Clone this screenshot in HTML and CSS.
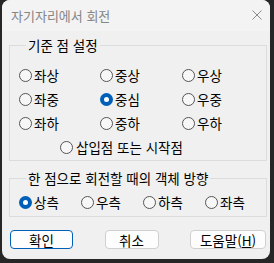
FILE: index.html
```html
<!DOCTYPE html>
<html lang="ko">
<head>
  <meta charset="UTF-8" />
  <title>자기자리에서 회전</title>
  <link rel="stylesheet" href="styles.css">
</head>
<body>

  <div class="window">
    <div class="titlebar">
      <span class="title">자기자리에서 회전</span>
      <svg class="close" width="10" height="10" viewBox="0 0 10 10">
        <path d="M0.5 0.5 L9.5 9.5 M9.5 0.5 L0.5 9.5" stroke="#8a8a8a" stroke-width="1" fill="none"/>
      </svg>
    </div>

    <div class="content">
      <fieldset class="group">
        <legend>기준 점 설정</legend>
        <div class="grid">
          <label class="opt"><span class="radio"></span>좌상</label>
          <label class="opt"><span class="radio"></span>중상</label>
          <label class="opt"><span class="radio"></span>우상</label>
          <label class="opt"><span class="radio"></span>좌중</label>
          <label class="opt"><span class="radio checked"></span>중심</label>
          <label class="opt"><span class="radio"></span>우중</label>
          <label class="opt"><span class="radio"></span>좌하</label>
          <label class="opt"><span class="radio"></span>중하</label>
          <label class="opt"><span class="radio"></span>우하</label>
        </div>
        <div class="row-insert">
          <label class="opt"><span class="radio"></span>삽입점 또는 시작점</label>
        </div>
      </fieldset>

      <fieldset class="group group-dir">
        <legend>한 점으로 회전할 때의 객체 방향</legend>
        <div class="dir">
          <label class="opt"><span class="radio checked"></span>상측</label>
          <label class="opt"><span class="radio"></span>우측</label>
          <label class="opt"><span class="radio"></span>하측</label>
          <label class="opt"><span class="radio"></span>좌측</label>
        </div>
      </fieldset>

      <div class="buttons">
        <button class="btn default ok">확인</button>
        <button class="btn cancel">취소</button>
        <button class="btn help">도움말(<u>H</u>)</button>
      </div>
    </div>
  </div>

</body>
</html>
```

FILE: styles.css
```css
* {
  margin: 0;
  padding: 0;
  box-sizing: border-box;
}

body {
  background: #262626;
  font-family: 'Noto Sans CJK KR', 'Noto Sans', sans-serif;
  font-size: 13.5px;
  color: #000;
  height: 263px;
  overflow: hidden;
}

.window {
  margin-left: 2px;
  width: 268px;
  height: 259px;
  background: #f0f0f0;
  border-radius: 8px;
  overflow: hidden;
}

.titlebar {
  height: 31px;
  background: #f3f3f3;
  display: flex;
  align-items: center;
  justify-content: space-between;
  padding: 0 8px 0 9px;
}

.title {
  color: #858585;
  font-size: 13px;
  line-height: 16px;
}

.close {
  display: block;
  margin-top: -1px;
}

.content {
  padding: 6px 3px 0 7px;
}

.group {
  border: 1px solid #dcdcdc;
  padding: 10px 0 1px 9px;
}

.group legend {
  margin-left: 7px;
  padding: 0 2px;
  line-height: 16px;
  height: 16px;
}

.grid {
  display: grid;
  grid-template-columns: 81px 82px 1fr;
  grid-auto-rows: 24px;
}

.opt {
  display: flex;
  align-items: center;
  gap: 2px;
  height: 24px;
  white-space: nowrap;
}

.radio {
  width: 13px;
  height: 13px;
  border: 1px solid #555;
  border-radius: 50%;
  background: #f7f7f7;
  flex: none;
}

.radio.checked {
  border: none;
  background: #005fb8;
  display: flex;
  align-items: center;
  justify-content: center;
}

.radio.checked::after {
  content: '';
  width: 5px;
  height: 5px;
  border-radius: 50%;
  background: #fff;
}

.row-insert {
  padding-left: 41px;
  height: 24px;
}

.row-insert .opt {
  gap: 3px;
}

.group-dir {
  margin-top: 9px;
  padding: 4px 0 2px 9px;
}

.dir {
  display: grid;
  grid-template-columns: 62px 62px 62px 1fr;
}

.buttons {
  display: flex;
  justify-content: space-between;
  margin-top: 13px;
  padding: 0 1px 0 1px;
}

.btn {
  height: 19px;
  background: #fdfdfd;
  border: 1px solid #d0d0d0;
  border-radius: 4px;
  font-family: inherit;
  font-size: 13.5px;
  color: #000;
  line-height: 16px;
}

.btn.default {
  border-color: #005fb8;
}

.ok {
  width: 63px;
}

.cancel {
  width: 54px;
}

.help {
  width: 76px;
}
```
